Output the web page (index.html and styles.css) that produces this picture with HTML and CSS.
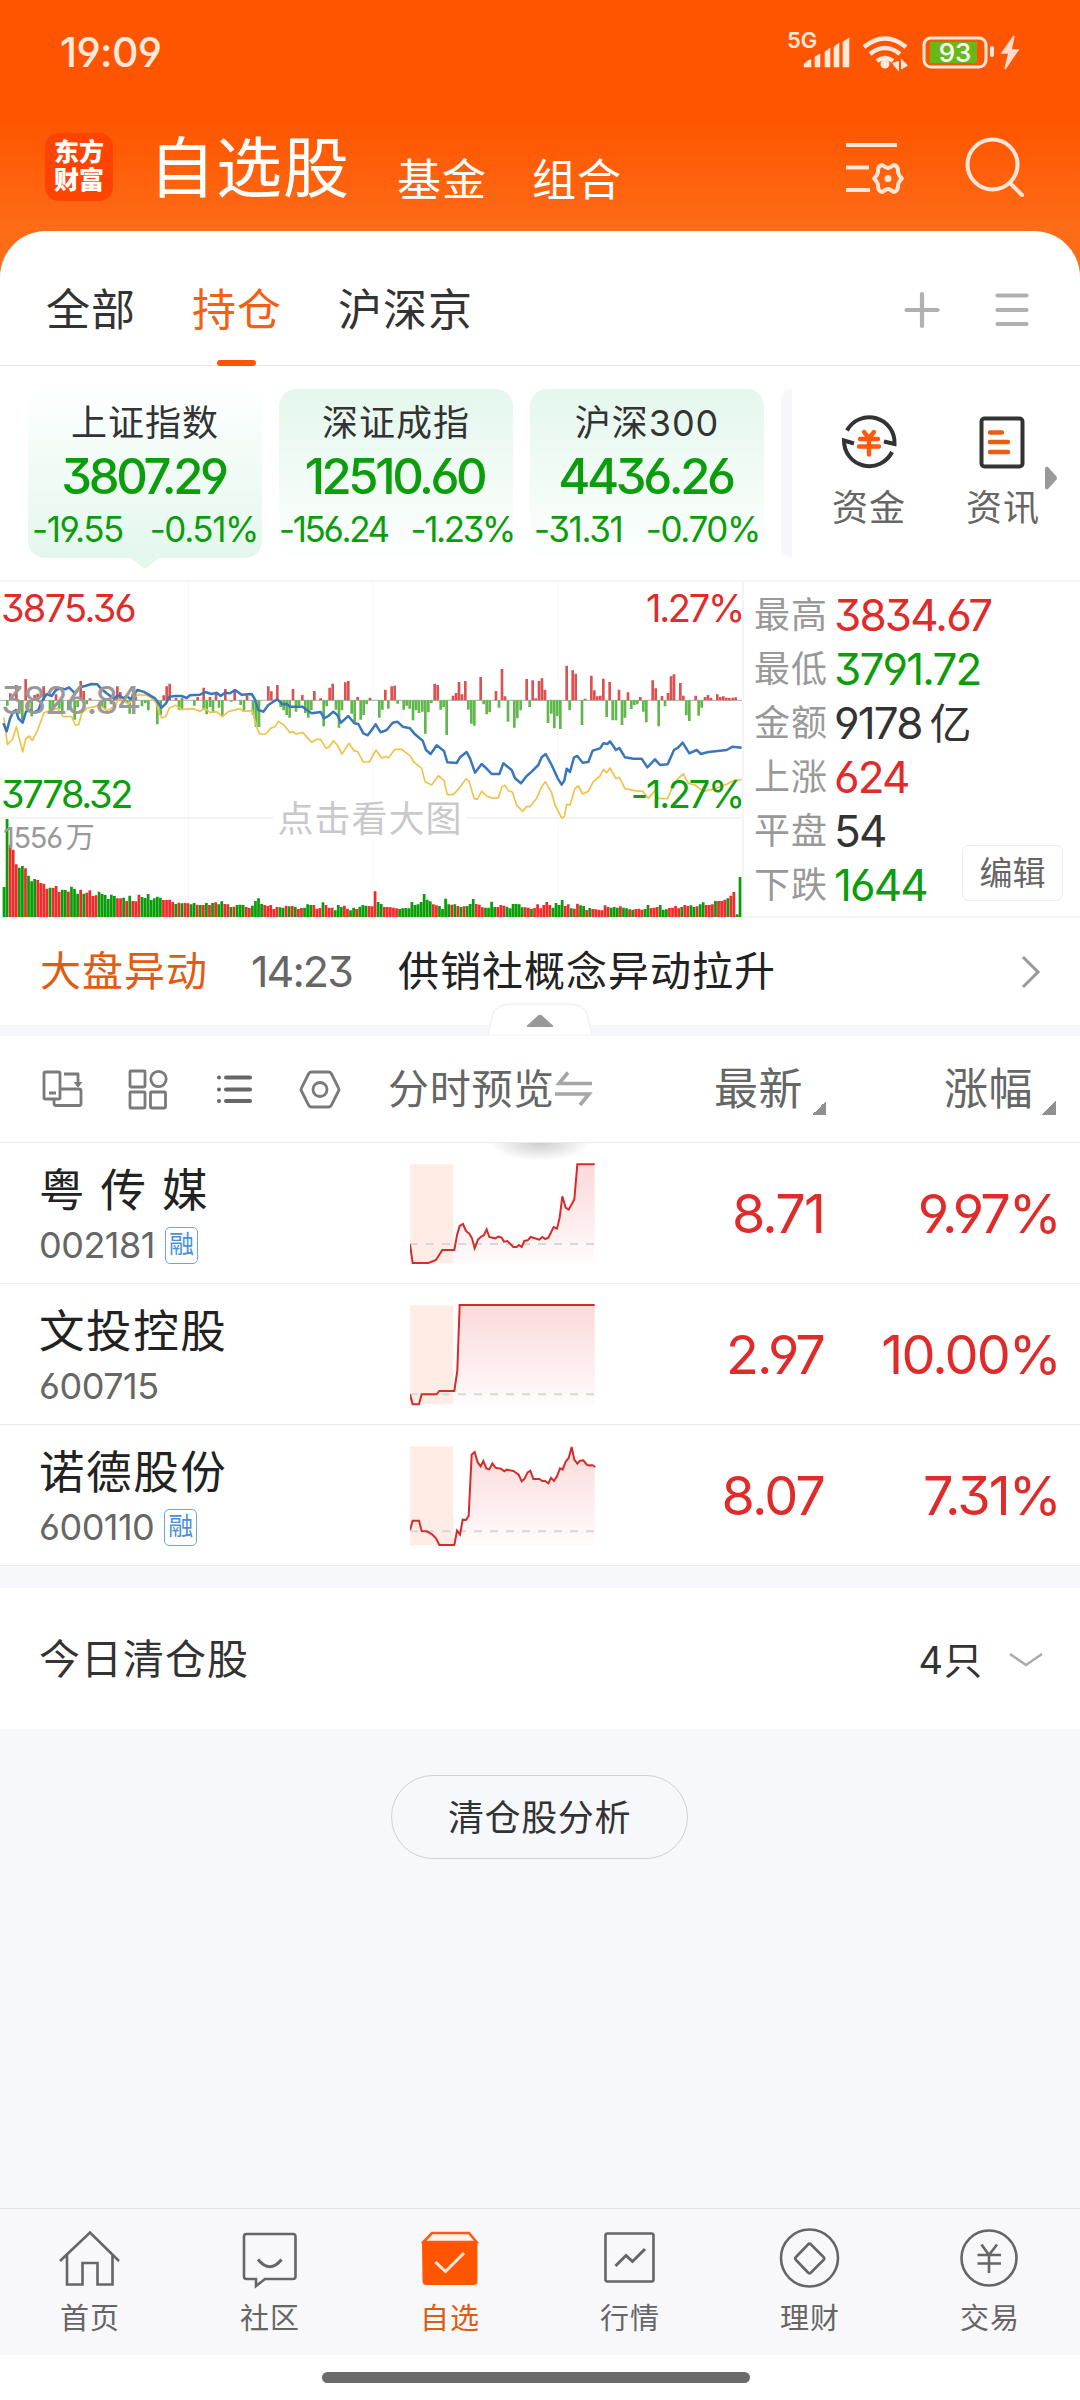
FILE: index.html
```html
<!DOCTYPE html>
<html lang="zh-CN">
<head>
<meta charset="utf-8">
<title>自选股</title>
<link rel="stylesheet" href="styles.css">
</head>
<body>
<div class="app">
  <header class="top">
    <div class="status">
      <span class="clock num">19:09</span>
      <svg class="status-icons" width="240" height="48" viewBox="0 -8 240 48">
        <text class="net" x="6" y="18">5G</text>
        <g fill="#ffe9dd">
          <path d="M23 37v-3l5-4h2v7zM34 37V27l5-3v13zM44 37V22l5-4v19zM53 37V17l5-4v24zM62 37V12l6-4v29z" stroke="#ffe9dd" stroke-width=".6" stroke-linejoin="round"/>
          <circle cx="104" cy="34" r="4.5"/>
          <path d="M117 31v8l-5-6m9 6v-8l5 5" stroke="#ffe9dd" stroke-width="2"/>
          <path d="M233 6l-12 17h7l-4 16 13-19h-7z" fill="#ffdccb" stroke="#ffdccb" stroke-width="1.500"/>
          <rect x="209" y="16" width="4" height="11" rx="2"/>
        </g>
        <g fill="none" stroke="#ffe9dd" stroke-width="4.6">
          <path d="M83 17q21-17 42 0M89 24q15-12 30 0M96 31q8-6 16 0"/>
        </g>
        <rect x="143" y="8" width="62" height="29" rx="7" fill="none" stroke="#ffe9dd" stroke-width="3"/>
        <rect x="149" y="12" width="47" height="21" fill="#6ab817"/>
        <text class="batt" x="174" y="32" text-anchor="middle">93</text>
      </svg>
    </div>
    <nav class="title">
      <div class="logo">东方<br>财富</div>
      <span class="t-main">自选股</span>
      <span class="t-sub">基金</span>
      <span class="t-sub">组合</span>
      <svg class="title-icons" width="190" height="70" viewBox="0 0 190 70" fill="none" stroke="#ffe6d8" stroke-width="4">
        <path d="M6 15h51M6 37.500h23M6 60h24"/>
        <path d="M42.500 35Q46 38 48 38Q50 38 53.500 35Q58.500 35.500 58 42.500Q59 46 62 48.500Q59 51 58 54.500Q58.500 61.500 53.500 62Q50 59 48 59Q46 59 42.500 62Q37.500 61.500 38 54.500Q37 51 34 48.500Q37 46 38 42.500Q37.500 35.500 42.500 35Z" stroke-linejoin="round"/>
        <circle cx="48" cy="48.500" r="3.500" fill="#ffe6d8" stroke="none"/>
        <circle cx="152.500" cy="34.500" r="25"/>
        <path d="M170 53l12 12" stroke-linecap="round"/>
      </svg>
    </nav>
  </header>

  <main class="sheet">
    <nav class="groups">
      <span>全部</span><span class="on">持仓</span><span>沪深京</span>
      <svg width="126" height="40" viewBox="0 0 126 40" stroke="#b0b0b0" stroke-width="4.200" stroke-linecap="round"><path d="M2.500 20h31M18 4v32M93.500 5.500h29M93.500 20h29M93.500 34h29"/></svg>
    </nav>

    <section class="indices">
      <article class="card active"><h3>上证指数</h3><b class="num">3807.29</b><p class="num"><i>-19.55</i><i>-0.51%</i></p></article>
      <article class="card tight"><h3>深证成指</h3><b class="num">12510.60</b><p class="num"><i>-156.24</i><i>-1.23%</i></p></article>
      <article class="card"><h3>沪深300</h3><b class="num">4436.26</b><p class="num"><i>-31.31</i><i>-0.70%</i></p></article>
      <div class="peek"></div>
      <div class="quick q1">
        <svg width="60" height="60" viewBox="0 0 60 60" fill="none" stroke="#333" stroke-width="4">
          <path d="M8 18.500A25.300 25.300 0 0 1 55.500 32L45 29.500M53 40A25.300 25.300 0 0 1 5 28.500L15 31.500"/>
          <path d="M25 20l5 6 5-6M21 27h18M20 34.500h20M30 27v15.500" stroke="#ff5a0a" stroke-width="4.400" stroke-linecap="round"/>
        </svg>
        <span>资金</span>
      </div>
      <div class="quick q2">
        <svg width="60" height="60" viewBox="0 0 60 60" fill="none" stroke="#333" stroke-width="4">
          <rect x="8.500" y="6.500" width="41" height="48" rx="3"/>
          <path d="M17 20.500h12M17 30h18M17 40h18" stroke="#f05a14" stroke-width="4.400" stroke-linecap="round"/>
        </svg>
        <span>资讯</span>
      </div>
      <svg class="more" width="14" height="24" viewBox="0 0 14 24"><path d="M1 3Q1 0 4 1L12.500 10.500Q13.500 12 12.500 13.500L4 23Q1 24 1 21Z" fill="#999"/></svg>
    </section>

    <section class="market">
      <div class="chart">
        <svg id="chart" width="742" height="338" viewBox="0 30 2226 1014" fill="none">
          <path d="M565 36V1040M1119 36V1040M1673 36V1040" stroke="#e6e6e6" stroke-width="3" stroke-dasharray="3 5"/>
          <path d="M0 744H820M1400 744H2226" stroke="#f0f0f2" stroke-width="5"/>
          <path d="M0 391H2226" stroke="#aaa" stroke-width="3"/>
          <g id="momentum"></g>
          <g id="volume"></g>
          <polyline stroke="#f3c14b" stroke-width="5" stroke-linejoin="round" points="12,442 22,524 38,507 49,470 68,546 77,507 88,498 97,512 112,482 132,428 145,424 160,420 172,415 190,440 215,440 226,465 236,464 245,430 262,414 285,410 297,403 320,422 345,408 355,388 368,388 385,403 400,385 415,374 440,376 455,385 468,398 478,430 485,444 497,440 508,414 528,406 545,418 580,416 600,424 615,415 630,427 650,425 667,440 685,425 720,416 730,424 757,422 770,470 778,492 797,492 812,475 825,470 835,454 852,465 870,488 880,485 888,492 908,487 935,517 950,508 962,508 978,535 988,530 1000,512 1012,525 1026,552 1047,520 1062,542 1073,545 1090,576 1108,576 1128,540 1145,564 1158,560 1165,564 1185,538 1205,538 1230,557 1240,575 1265,595 1275,635 1295,645 1315,617 1332,632 1342,674 1360,674 1380,652 1398,626 1408,635 1422,685 1432,688 1445,664 1460,678 1478,685 1495,683 1506,650 1515,646 1525,662 1537,666 1550,706 1568,724 1580,710 1590,710 1610,685 1625,650 1636,635 1655,668 1665,705 1685,744 1693,740 1700,703 1710,705 1725,655 1735,648 1748,672 1765,664 1780,635 1800,618 1810,598 1820,608 1830,594 1848,626 1858,622 1875,656 1905,662 1928,664 1945,685 1965,662 1975,685 2003,686 2022,640 2035,625 2050,612 2065,640 2085,645 2110,664 2150,655 2180,643 2205,630 2225,630"/>
          <polyline stroke="#3a76ba" stroke-width="7.500" stroke-linejoin="round" points="10,460 20,484 30,446 40,425 48,420 55,445 68,458 78,425 90,420 100,428 115,420 125,395 140,372 155,378 168,360 180,355 195,358 207,352 225,370 240,352 255,348 275,342 292,343 305,358 320,370 340,385 355,376 370,384 380,378 392,388 412,360 430,365 445,373 465,385 485,413 498,400 508,380 525,378 545,378 560,384 570,376 600,374 615,366 635,372 650,368 662,378 675,368 690,370 705,360 725,374 755,372 765,388 775,420 790,425 805,405 820,395 832,388 848,403 860,402 870,410 908,410 920,420 935,430 962,426 972,445 985,438 1000,425 1012,435 1023,458 1045,438 1063,460 1075,462 1090,490 1103,496 1115,480 1127,463 1142,487 1160,480 1178,458 1192,455 1208,470 1230,475 1245,493 1268,512 1278,540 1292,552 1310,526 1332,543 1342,577 1370,579 1380,562 1400,546 1410,565 1425,608 1445,582 1460,596 1475,612 1498,612 1510,580 1535,600 1545,625 1563,640 1580,618 1595,605 1615,585 1625,562 1637,552 1655,585 1673,625 1685,644 1693,632 1700,596 1710,606 1722,562 1732,558 1748,578 1765,576 1778,542 1800,535 1810,520 1822,522 1830,514 1848,540 1858,534 1875,562 1900,566 1925,566 1942,592 1965,568 1980,585 2003,583 2022,540 2035,532 2048,518 2068,550 2090,540 2103,552 2125,546 2160,542 2180,540 2198,530 2225,533"/>
        </svg>
        <span class="lab l-top up num">3875.36</span>
        <span class="lab l-mid num">3826.84</span>
        <span class="lab l-low down num">3778.32</span>
        <span class="lab r-top up num">1.27%</span>
        <span class="lab r-low down num">-1.27%</span>
        <span class="lab vol"><span class="num">1556</span>万</span>
        <span class="lab hint">点击看大图</span>
      </div>
      <dl class="stats">
        <div><dt>最高</dt><dd class="num up">3834.67</dd></div>
        <div><dt>最低</dt><dd class="num down">3791.72</dd></div>
        <div><dt>金额</dt><dd class="num">9178<span class="unit">亿</span></dd></div>
        <div><dt>上涨</dt><dd class="num up">624</dd></div>
        <div><dt>平盘</dt><dd class="num">54</dd></div>
        <div><dt>下跌</dt><dd class="num down">1644</dd></div>
        <button class="edit">编辑</button>
      </dl>
    </section>

    <section class="news">
      <strong>大盘异动</strong><time class="num">14:23</time><span>供销社概念异动拉升</span>
      <svg width="20" height="34" viewBox="0 0 20 34" fill="none" stroke="#999" stroke-width="3"><path d="M2 2l15 15L2 32"/></svg>
    </section>
    <div class="band">
      <svg class="handle" width="106" height="32" viewBox="0 0 106 32"><path d="M1 31L5 14Q8 1 24 1H82Q98 1 101 14L105 31" fill="#fff" stroke="#f0f1f3" stroke-width="1.500"/><path d="M40 22.500L51 12.500Q53 11 55 12.500L66 22.500Q67 24 65 24H41Q39 24 40 22.500Z" fill="#999"/></svg>
    </div>

    <section class="tools">
      <svg class="tool-icons" width="310" height="44" viewBox="0 0 310 44" fill="none" stroke="#7a7a7a" stroke-width="2.800">
        <g stroke-linejoin="round">
          <rect x="5" y="5" width="16" height="27" rx="1.500"/><path d="M10 26h7M15 33v3q0 2.500 2 2.500h23q2 0 2-2V24q0-2-2-2H22M25 7h14v12"/><path d="M35.500 15.500h7L39 20z" fill="#7a7a7a" stroke-width="1"/>
        </g>
        <rect x="91" y="4" width="15" height="16" rx="1"/><circle cx="119.500" cy="12" r="7.700"/><rect x="91" y="25" width="15" height="16" rx="1"/><rect x="111.500" y="25" width="15" height="16" rx="1"/>
        <path d="M187 10.500h24M187 22.500h24M187 34h24M180 10.500v.1M180 22.500v.1M180 34v.1" stroke="#666" stroke-width="4" stroke-linecap="round"/>
        <path d="M272.500 5h17q2 0 3 2l7 14q1 1.500 0 3l-7 14q-1 2-3 2h-17q-2 0-3-2l-7-14q-1-1.500 0-3l7-14q1-2 3-2z"/><circle cx="281" cy="22.500" r="7"/>
      </svg>
      <span class="preview">分时预览</span>
      <svg class="swap" width="38" height="36" viewBox="0 0 38 36" fill="none" stroke="#a6a6a6" stroke-width="3.600"><path d="M37 12.500H4L13 1.500M0 23H34L25 34"/></svg>
      <span class="col c1">最新<em></em></span>
      <span class="col c2">涨幅<em></em></span>
    </section>

    <section class="stocks">
      <div class="glow"></div>
      <article class="stock">
        <div class="who"><h4>粤&nbsp;传&nbsp;媒</h4><p><span class="num">002181</span><i>融</i></p></div>
        <svg width="186" height="102" viewBox="60 98 558 306" fill="none">
          <defs><linearGradient id="fade" x1="0" y1="102" x2="0" y2="399" gradientUnits="userSpaceOnUse"><stop offset="0" stop-color="#fbd9da"/><stop offset="1" stop-color="#fffbfb"/></linearGradient></defs>
          <path d="M60 102H190V399H60z" fill="#ffede5"/>
          <path fill="url(#fade)" d="M190 399V359L201 315 209 287 219 281 228 302 238 310 246 324 254 354 264 328 290 297 298 320 342 330 370 350 395 350 403 332 422 320 475 322 491 290 501 295 509 262 517 198 527 232 536 238 553 207 562 102H614V399z"/>
          <path class="dash" d="M60 341H614"/>
          <polyline class="trend" points="60,342 68,398 115,398 138,389 157,359 193,359 201,315 209,287 219,281 228,302 238,310 246,324 254,354 264,328 272,320 282,314 290,297 298,320 316,324 325,319 335,322 342,334 352,332 370,350 380,350 387,344 395,350 403,332 413,330 422,320 448,328 457,320 466,326 475,322 491,290 501,295 509,262 517,198 527,232 536,238 553,207 562,102 614,102"/>
        </svg>
        <span class="price num">8.71</span><span class="pct num">9.97%</span>
      </article>
      <article class="stock">
        <div class="who"><h4>文投控股</h4><p><span class="num">600715</span></p></div>
        <svg width="186" height="102" viewBox="60 98 558 306" fill="none">
          <path d="M60 102H190V399H60z" fill="#ffede5"/>
          <path fill="url(#fade)" d="M190 399V359L202 297 209 101H614V399z"/>
          <path class="dash" d="M60 369H614"/>
          <polyline class="trend" points="60,369 68,399 87,399 95,369 140,369 148,359 193,359 202,297 209,101 614,101"/>
        </svg>
        <span class="price num">2.97</span><span class="pct num">10.00%</span>
      </article>
      <article class="stock">
        <div class="who"><h4>诺德股份</h4><p><span class="num">600110</span><i>融</i></p></div>
        <svg width="186" height="102" viewBox="60 98 558 306" fill="none">
          <path d="M60 102H190V399H60z" fill="#ffede5"/>
          <path fill="url(#fade)" d="M193 399L201 355 210 367 218 322 236 311 245 127 254 119 263 150 272 162 280 146 298 171 307 153 316 166 386 187 395 207 421 175 430 200 475 213 492 206 510 168 527 148 536 137 545 104 553 142 562 154 580 144 614 164V399z"/>
          <path class="dash" d="M60 357H614"/>
          <polyline class="trend" points="60,354 68,325 87,325 95,356 110,357 125,365 138,378 148,398 193,398 201,355 210,367 218,322 228,323 236,311 245,127 254,119 263,150 272,162 280,146 289,168 298,171 307,153 316,166 333,169 343,177 350,172 370,176 386,187 395,207 403,200 413,180 421,175 430,200 448,200 457,206 465,206 475,213 483,197 492,206 501,192 510,168 518,172 527,148 536,137 545,104 553,142 562,154 570,145 580,144 590,157 600,160 606,158 616,164"/>
        </svg>
        <span class="price num">8.07</span><span class="pct num">7.31%</span>
      </article>
    </section>
  </main>

  <section class="cleared">
    <span>今日清仓股</span><span class="count">4只</span>
    <svg width="36" height="18" viewBox="0 0 36 18" fill="none" stroke="#aaa" stroke-width="2.500"><path d="M2 3l16 11L34 3"/></svg>
  </section>
  <button class="analyse">清仓股分析</button>

  <nav class="tabbar">
    <a><svg viewBox="0 0 64 64"><path d="M2 35L32 6.500 61 35M9 29V58.500H24.500V37H39.500V58.500H54.500V29"/></svg>首页</a>
    <a><svg viewBox="0 0 64 64"><path d="M8.500 8H55q2.500 0 2.500 2.500V50.500q0 2.500-2.500 2.500H27L18 60V53H8.500Q6 53 6 50.500V10.500Q6 8 8.500 8z"/><path d="M20 33.500q12 14.500 23.500 0" stroke-width="3"/></svg>社区</a>
    <a class="on"><svg viewBox="0 0 64 64"><path d="M4 16H59.500V55q0 4-4 4H8.500q-4 0-4-4z" fill="#ff5500" stroke="none"/><path d="M5.500 16L14 7H51L58.500 16z" fill="#fff3ec" stroke="#ff5a10"/><path d="M17.500 36L27.500 45.500 46 27" stroke="#ffe8dc" stroke-width="3"/></svg>自选</a>
    <a><svg viewBox="0 0 64 64"><rect x="7.500" y="7.500" width="48" height="48" rx="2"/><path d="M17.500 40L28 29.500 34.500 35.500 47 23" stroke-width="3"/></svg>行情</a>
    <a><svg viewBox="0 0 64 64"><circle cx="31.500" cy="32" r="28.500"/><path d="M30 18.500L18 31q-1.500 1.500 0 3L30 46.500q1.500 1.500 3 0L45.500 34q1.500-1.500 0-3L33 18.500q-1.500-1.500-3 0z"/></svg>理财</a>
    <a><svg viewBox="0 0 64 64"><circle cx="31" cy="32" r="27.500"/><path d="M23.500 18.500L31 29 39 18.500M19.500 29H43M19.500 37.500H43M31 29V47"/></svg>交易</a>
  </nav>
  <footer class="home"><span></span></footer>
</div>
<script src="chart.js"></script>
</body>
</html>
```
FILE: styles.css
```css
* { box-sizing: border-box; margin: 0; padding: 0; }
body {
  width: 1080px; height: 2400px; background: #f7f8fb; color: #333;
  font-family: Inter, "Noto Sans CJK SC", sans-serif; font-weight: 400;
  line-height: 1; letter-spacing: 1px; overflow: hidden;
}
i, em { font-style: normal; }
button { font: inherit; letter-spacing: inherit; color: inherit; }
span, strong, time, h3, h4 { white-space: nowrap; }
.num { letter-spacing: -.045em; font-feature-settings: "cv03", "cv04", "cv09"; }
.up { color: #e02b2b !important; }
.down { color: #0b9d0b !important; }
.app { display: flex; flex-direction: column; height: 2400px; }

.top { height: 290px; background: linear-gradient(#ff5500 120px, #ff6c17 232px); color: #fff; }
.status { height: 104px; padding: 22px 59px 0 60px; display: flex; justify-content: space-between; }
.clock { font-size: 41px; line-height: 44px; margin-top: 8px; font-weight: 500; color: #ffe9dd; letter-spacing: -.015em; }
.status-icons { overflow: visible; }
.status-icons text { font-family: Inter, sans-serif; letter-spacing: 0; }
.net { font-size: 22px; font-weight: 600; fill: #ffe9dd; }
.batt { font-size: 26px; font-weight: 500; fill: #fff; }
.title { display: flex; align-items: flex-start; padding-left: 45px; }
.logo {
  width: 68px; height: 68px; margin-top: 29px; border-radius: 14px; background: #ff4300;
  font-size: 25px; line-height: 28px; font-weight: 900; letter-spacing: 0; text-align: center; padding-top: 5px;
}
.t-main { width: 201px; font-size: 66px; line-height: 66px; letter-spacing: 1px; margin: 31px 47px 0 36px; }
.t-sub { width: 90px; font-size: 44px; line-height: 44px; margin: 54px 45px 0 0; }
.title-icons { margin: 26px 0 0 173px; }

.sheet { margin-top: -59px; height: 1335px; background: #fff; border-radius: 46px 46px 0 0; }
.groups { height: 135px; display: flex; align-items: center; padding: 22px 50px 0 46px; border-bottom: 1px solid #e3e5e7; font-size: 44px; }
.groups span { height: 112px; line-height: 114px; margin-right: 56px; position: relative; }
.groups .on { color: #f26012; }
.groups .on::after { content: ""; position: absolute; left: 25px; bottom: -1px; width: 39px; height: 6px; border-radius: 3px; background: #ff5500; }
.groups svg { margin: 1px 0 0 auto; flex: none; }

.indices { height: 214px; padding: 23px 0 0 28px; display: flex; position: relative; }
.card { width: 234px; height: 169px; margin-right: 17px; border-radius: 17px; background: linear-gradient(#e4f7ed, #fdfffe); text-align: center; flex: none; }
.card.active { background: linear-gradient(#fdfffe, #e4f7ed); position: relative; }
.card.active::after { content: ""; position: absolute; left: 103px; top: 169px; border: 14px solid transparent; border-width: 11px 14px 0; border-top-color: #e4f7ed; }
.card h3 { font-size: 36px; line-height: 40px; margin-top: 14px; font-weight: 400; }
.card b { display: block; font-size: 49px; line-height: 50px; margin: 9px 3px 1px 0; font-weight: 550; color: #0b9d0b; letter-spacing: -.07em; }
.card p { font-size: 35px; line-height: 40px; margin-top: 7px; padding: 0 4px 0 4px; color: #0b9d0b; display: flex; justify-content: space-between; letter-spacing: -.04em; }
.card.tight p { padding: 0; margin-right: -1px; letter-spacing: -.068em; }
.peek { width: 11px; height: 169px; border-radius: 11px 0 0 11px; background: #f6f7fa; }
.quick { display: flex; flex-direction: column; align-items: center; font-size: 36px; color: #666; width: 74px; margin-top: 23px; }
.quick svg { flex: none; }
.quick span { line-height: 40px; margin-top: 16px; }
.q1 { margin-left: 40px; }
.q2 { margin-left: 60px; }
.more { margin: 77px 0 0 4px; }

.market { height: 338px; display: flex; border-top: 2px solid #f3f4f5; border-bottom: 2px solid #f3f4f5; }
.chart { width: 744px; border-right: 2px solid #f3f4f5; position: relative; flex: none; }
#chart { display: block; margin-top: -2px; }
.lab { position: absolute; font-size: 38px; line-height: 40px; color: #999; }
.l-top { left: 1px; top: 6px; }
.l-mid { left: 1px; top: 98px; }
.l-low { left: 1px; top: 192px; letter-spacing: -.06em; }
.r-top, .r-low { right: -1px; letter-spacing: -.06em; }
.r-top { top: 6px; }
.r-low { top: 192px; }
.vol { left: 3px; top: 236px; font-size: 29px; letter-spacing: 0; }
.vol .num { margin-right: 4px; }
.hint { left: 273px; top: 217px; width: 194px; background: #fff; color: #c9c9c9; font-size: 36px; text-align: center; }
.stats { position: relative; flex: 1; padding: 6px 0 0 10px; }
.stats div { display: flex; height: 54px; align-items: center; }
.stats dt { font-size: 36px; width: 80px; color: #999; }
.stats dd { font-size: 44px; color: #333; letter-spacing: -.042em; }
.unit { font-size: 42px; margin-left: 8px; }
.edit { position: absolute; left: 218px; top: 263px; width: 101px; height: 56px; border: 1.500px solid #ececee; border-radius: 7px; background: #fff; font-size: 33px; color: #666; letter-spacing: 0; }

.news { height: 107px; padding: 0 39px 0 40px; display: flex; align-items: center; font-size: 41px; color: #222; }
.news strong { font-weight: 400; color: #e05c10; width: 211px; }
.news time { font-size: 43px; color: #666; width: 147px; }
.news svg { margin-left: auto; }
.band { height: 11px; background: #f6f7fa; position: relative; }
.handle { position: absolute; left: 487px; top: -22px; }

.tools { height: 107px; display: flex; align-items: center; padding-left: 39px; border-bottom: 1px solid #eaeaec; color: #666; }
.preview { font-size: 41px; margin-left: 39px; width: 167px; letter-spacing: .7px; }
.col { font-size: 44px; letter-spacing: .5px; display: flex; align-items: flex-end; }
.col em { width: 14px; height: 14px; background: linear-gradient(135deg, transparent 50%, #8e8e93 50%); margin: 0 0 -4px 9px; }
.c1 { margin-left: 121px; }
.c2 { margin-left: 118px; }

.stocks { position: relative; }
.glow { position: absolute; left: 480px; top: 0; width: 120px; height: 18px; background: radial-gradient(ellipse 50px 18px at 50% 0, #0003, transparent); }
.stock { height: 141px; display: flex; border-bottom: 1px solid #eaeaec; padding-left: 39px; }
.who { width: 371px; }
.who h4 { font-size: 45.5px; line-height: 50px; font-weight: 400; color: #222; margin-top: 23px; letter-spacing: 1.600px; }
.who p { display: flex; align-items: center; height: 40px; margin-top: 9px; font-size: 36px; color: #666; }
.who p .num { letter-spacing: -.014em; }
.who p i { width: 33px; height: 37px; margin-left: 10px; border: 1.500px solid #6fa5dc; border-radius: 5px; font-size: 25px; line-height: 33px; text-align: center; color: #4a90d9; letter-spacing: 0; }
.stock svg { margin-top: 20px; flex: none; }
.dash { stroke: #d5d7da; stroke-width: 6; stroke-dasharray: 24 24; }
.trend { stroke: #d42b2b; stroke-width: 6; }
.price, .pct { font-size: 54px; line-height: 141px; color: #e02b2b; text-align: right; letter-spacing: -.035em; flex: none; }
.price { width: 228px; }
.pct { width: 236px; }

.cleared { height: 141px; margin-top: 22px; background: #fff; display: flex; align-items: center; padding: 2px 36px 0 39px; font-size: 41px; flex: none; }
.count { margin-left: auto; margin-right: 25px; font-size: 38px; }
.analyse { width: 297px; height: 84px; margin: 46px 392px 0 391px; border: 1.500px solid #d0d1d4; border-radius: 42px; background: none; font-size: 36px; line-height: 38px; padding-top: 2px; color: #333; flex: none; letter-spacing: .6px; }

.tabbar { margin-top: auto; height: 147px; flex: none; border-top: 1px solid #e2e3e6; background: #f8f8fb; display: flex; color: #666; font-size: 29px; }
.tabbar a { flex: 1; display: flex; flex-direction: column; align-items: center; padding-top: 17px; line-height: 32px; }
.tabbar svg { width: 64px; height: 64px; margin-bottom: 13px; fill: none; stroke: #666; stroke-width: 2.600; }
.tabbar .on { color: #e05c10; }
.home { height: 45px; flex: none; background: #fff; padding-top: 17px; }
.home span { display: block; width: 428px; height: 11px; border-radius: 6px; background: #6a6a6a; margin: 0 auto 0 322px; }
```
FILE: chart.js
```js
// Minute volume: bar height followed by r (rise) or g (fall).
const volume = `90g 294g 217r 202r 158r 148g 153g 146r 124g 107g 114g 111r 102r 100r 85r 88g 87r 93r 75r 82g 81g 76r 91g 84g 70g 82r 70g 73r 80r 63r
65r 76g 69g 66g 54g 67g 63g 56r 56r 58g 48r 64g 48r 47r 67r 60g 57g 69g 51g 56g 61g 58g 51r 51r 52r 45r 39g 43r 41g 42r
41r 38g 42g 37r 36g 36r 42g 36r 42g 44r 38g 47g 39r 38r 30g 31r 36g 37g 36g 30r 27r 34g 48g 56g 39g 36r 33r 36r 24r 30r
29g 28g 34r 32g 33r 30g 24r 27r 28g 38g 36g 36r 25r 27r 44g 36r 28r 28r 20g 36g 30g 34r 25r 20g 28g 24r 31g 36g 34g 33r
32r 77r 45g 39g 30r 30r 29r 28r 26r 24g 26g 27g 26g 45g 36g 38g 45g 69g 52g 47g 38r 35r 33g 24g 55g 38g 37r 38g 33r 30g
32r 33g 39g 54g 39r 37r 29r 28g 28g 46g 30g 30r 36r 34r 31g 26g 39g 39g 38g 29g 29r 28r 24g 27r 38r 26r 36r 45r 36r 28g
42g 36g 51g 33r 38r 26g 25r 40r 35g 33g 21r 27g 24r 23r 22r 20r 35r 30r 28g 30g 28g 32r 28g 26g 23r 22g 24r 25r 22r 24g
36g 27r 28r 30r 36g 22g 23g 27r 28r 33r 26r 30g 36r 33r 35g 30g 32r 38g 44g 36r 36r 38r 48g 48r 48r 52r 56g 64r 75r 8g 120g`.split(/\s+/);

// Momentum around the zero line: x:height, negative values hang below.
const momentum = `31:21 49:46 77:64 104:16 113:20 131:42 168:18 242:58 251:28 270:6 343:8 352:42 361:25 398:20 407:18 491:15 500:42 509:50 528:8 546:6 593:10 611:38 630:10 648:20 676:34 704:30 741:15 805:42 814:27 832:46 879:34 907:16 943:28 962:6 989:38 998:50 1036:54 1045:58 1073:10 1110:8
22:-16 58:-40 67:-62 85:-22 95:-48 150:-28 159:-20 178:-25 187:-36 205:-30 224:-58 233:-20 260:-12 306:-20 315:-26 333:-12 380:-8 389:-40 426:-18 436:-8 445:-30 472:-72 482:-44 537:-28 546:-30 583:-16 611:-28 620:-42 630:-20 639:-38 657:-22 667:-50 694:-4 722:-14 732:-34 759:-44 768:-80 777:-80 842:-20 851:-30 860:-44 869:-52 888:-34 897:-16 916:-38 925:-52 934:-30 971:-78 980:-18 1008:-28 1017:-82 1026:-30 1055:-40 1064:-66 1082:-58 1091:-44 1100:-12
1156:32 1175:42 1184:44 1304:50 1313:46 1359:14 1368:22 1377:55 1386:18 1396:58 1442:70 1488:28 1506:94 1515:12 1580:64 1598:60 1607:6 1617:58 1626:66 1635:32 1700:104 1718:90 1727:80 1755:5 1774:74 1783:30 1792:12 1801:14 1810:65 1829:55 1857:32 1884:24 1921:10 1958:60 1967:36 1986:13 2004:22 2013:72 2022:78 2041:52 2050:14 2087:14 2115:10 2124:16 2133:8 2152:18 2161:10 2170:12 2179:8 2188:7 2198:8 2207:9
1138:-52 1147:-28 1165:-25 1193:-10 1211:-28 1220:-16 1229:-25 1239:-60 1248:-30 1257:-38 1267:-34 1276:-100 1285:-36 1294:-8 1322:-28 1331:-20 1340:-104 1405:-28 1414:-70 1423:-76 1451:-12 1460:-42 1469:-36 1497:-22 1524:-64 1543:-82 1552:-54 1562:-30 1589:-20 1644:-68 1654:-40 1663:-84 1672:-48 1681:-86 1709:-30 1746:-74 1820:-50 1838:-60 1848:-60 1866:-74 1875:-52 1894:-26 1903:-14 1912:-12 1930:-34 1939:-66 1976:-78 1995:-18 2059:-45 2068:-62 2096:-46 2105:-22`.split(/\s+/);

const bars = (list, color, width) => `<path stroke="${color}" stroke-width="${width}" d="${list.join("")}"/>`;

const vol = { r: [], g: [] };
volume.forEach((v, i) => vol[v.slice(-1)].push(`M${(12 + i * 9.2).toFixed(1)} 1041v-${parseInt(v)}`));
document.getElementById("volume").innerHTML = bars(vol.r, "#ef2b2b", 8.2) + bars(vol.g, "#0a9c0a", 8.2);

const mom = { r: [], g: [] };
momentum.forEach(m => {
  const [x, h] = m.split(":").map(Number);
  mom[h > 0 ? "r" : "g"].push(`M${x} 391v${-h}`);
});
document.getElementById("momentum").innerHTML = bars(mom.r, "#dc5252", 8) + bars(mom.g, "#61b84a", 8);
```
